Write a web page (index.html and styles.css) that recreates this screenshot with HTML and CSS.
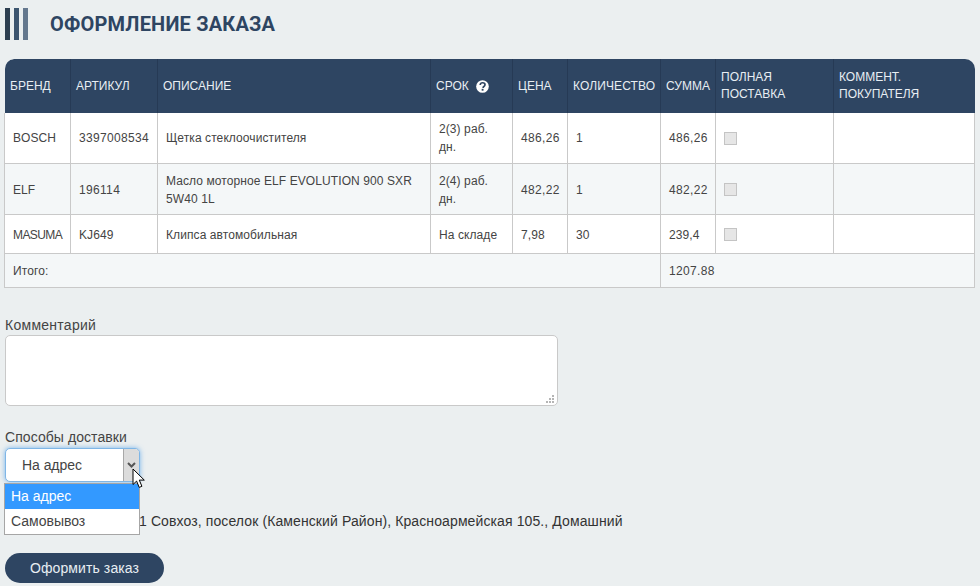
FILE: index.html
```html
<!DOCTYPE html>
<html lang="ru">
<head>
<meta charset="utf-8">
<title>Оформление заказа</title>
<link rel="stylesheet" href="styles.css">
</head>
<body>
<header class="page-head">
  <div class="bars"><i class="bar b1"></i><i class="bar b2"></i><i class="bar b3"></i></div>
  <h1 class="title">ОФОРМЛЕНИЕ ЗАКАЗА</h1>
</header>
<table class="order">
  <colgroup>
    <col class="c1"><col class="c2"><col class="c3"><col class="c4"><col class="c5"><col class="c6"><col class="c7"><col class="c8"><col class="c9">
  </colgroup>
  <thead>
    <tr>
      <th>БРЕНД</th><th>АРТИКУЛ</th><th>ОПИСАНИЕ</th>
      <th><span class="srok">СРОК
        <svg class="help" viewBox="0 0 14 14" width="13" height="13"><circle cx="7" cy="7" r="6.8" fill="#fff"/><path d="M4.5 5.4C4.6 3.9 5.7 3 7.1 3c1.5 0 2.6.9 2.6 2.1 0 1-.6 1.5-1.2 1.9-.6.4-.8.7-.8 1.3v.2" fill="none" stroke="#2e4562" stroke-width="1.8"/><rect x="6.1" y="9.5" width="2" height="2" fill="#2e4562"/></svg></span></th>
      <th>ЦЕНА</th><th class="wide">КОЛИЧЕСТВО</th><th>СУММА</th><th>ПОЛНАЯ ПОСТАВКА</th><th>КОММЕНТ. ПОКУПАТЕЛЯ</th>
    </tr>
  </thead>
  <tbody>
    <tr class="r-tall r-first">
      <td>BOSCH</td><td class="num">3397008534</td><td>Щетка стеклоочистителя</td><td>2(3) раб. дн.</td><td class="num">486,26</td><td>1</td><td class="num">486,26</td><td><span class="check"></span></td><td></td>
    </tr>
    <tr class="r-tall alt">
      <td>ELF</td><td class="num">196114</td><td>Масло моторное ELF EVOLUTION 900 SXR 5W40 1L</td><td>2(4) раб. дн.</td><td class="num">482,22</td><td>1</td><td class="num">482,22</td><td><span class="check"></span></td><td></td>
    </tr>
    <tr class="r-mid">
      <td class="tight">MASUMA</td><td>KJ649</td><td>Клипса автомобильная</td><td>На складе</td><td>7,98</td><td>30</td><td>239,4</td><td><span class="check"></span></td><td></td>
    </tr>
    <tr class="r-total alt">
      <td colspan="6">Итого:</td><td colspan="3" class="num">1207.88</td>
    </tr>
  </tbody>
</table>

<section class="form">
  <label class="lbl lbl-comment">Комментарий</label>
  <div class="area">
    <svg class="grip" viewBox="0 0 9 9" width="9" height="9" fill="#b5b5b5"><rect x="7" y="1" width="2" height="2"/><rect x="4" y="4" width="2" height="2"/><rect x="7" y="4" width="2" height="2"/><rect x="1" y="7" width="2" height="2"/><rect x="4" y="7" width="2" height="2"/><rect x="7" y="7" width="2" height="2"/></svg>
  </div>
  <label class="lbl lbl-delivery">Способы доставки</label>
  <div class="select-wrap">
    <div class="select">
      <span class="select-value">На адрес</span>
      <span class="select-btn">
        <svg viewBox="0 0 9 6" width="9" height="6"><path d="M1 1l3.5 3.5L8 1" fill="none" stroke="#555" stroke-width="2"/></svg>
      </span>
    </div>
    <ul class="options">
      <li class="opt opt-on">На адрес</li>
      <li class="opt">Самовывоз</li>
    </ul>
    <svg class="cursor" viewBox="0 0 14 21" width="14" height="21"><path d="M1 1v15.5l3.6-3.4 2.6 6.3 2.7-1.1-2.6-6.2h5z" fill="#fff" stroke="#000" stroke-width="1"/></svg>
  </div>
  <p class="address">1 Совхоз, поселок (Каменский Район), Красноармейская 105., Домашний</p>
  <button class="submit" type="button">Оформить заказ</button>
</section>
</body>
</html>
```
FILE: styles.css
```css
* { box-sizing: border-box; }
html, body { margin: 0; padding: 0; }
body {
  width: 980px;
  height: 586px;
  overflow: hidden;
  background: #ebeff0;
  color: #444;
  font-family: "Liberation Sans", Arial, sans-serif;
  font-size: 14px;
}
.page-head {
  display: flex;
  align-items: center;
  height: 59px;
  padding: 8px 0 19px 5px;
}
.bars { display: flex; gap: 4px; }
.bar { display: block; width: 5px; height: 32px; }
.b1 { background: #2c3e50; }
.b2 { background: #3c556f; }
.b3 { background: #64788e; }
.title {
  margin: 0 0 0 22px;
  font-family: Roboto, sans-serif;
  font-size: 20px;
  font-weight: 700;
  letter-spacing: .18px;
  color: #2e4562;
}
.order {
  width: 971px;
  margin-left: 4px;
  table-layout: fixed;
  border-collapse: separate;
  border-spacing: 0;
  font-size: 12px;
  background: transparent;
}
.c1 { width: 67px; } .c2 { width: 87px; } .c3 { width: 273px; }
.c4 { width: 82px; } .c5 { width: 55px; } .c6 { width: 93px; }
.c7 { width: 55px; } .c8 { width: 118px; } .c9 { width: 141px; }
.order th {
  height: 54px;
  padding: 0 5px;
  text-align: left;
  font-weight: 400;
  line-height: 17px;
  color: #e8eef3;
  background: #2e4562;
  border-right: 1px solid #263a55;
}
.order th:first-child {
  border-left: 1px solid transparent;
  background-clip: padding-box;
  border-top-left-radius: 10px;
}
.order th:last-child {
  border-right: 0;
  border-top-right-radius: 10px;
}
.order .wide { letter-spacing: .1px; }
.srok { display: inline-flex; align-items: center; gap: 7px; }
.order td {
  padding: 1px 8px 0;
  line-height: 18px;
  letter-spacing: .09px;
  background: #fff;
  border-right: 1px solid #c9c9c9;
  border-bottom: 1px solid #c9c9c9;
}
.order .r-first td { padding-top: 0; }
.order td.num { letter-spacing: .33px; }
.order td.tight { letter-spacing: -.6px; }
.order td:first-child { border-left: 1px solid #c9c9c9; }
.order .alt td { background: #f4f7f8; }
.r-tall td { height: 51px; }
.r-mid td { height: 39px; }
.r-total td { height: 34px; }
.check {
  display: block;
  width: 13px;
  height: 13px;
  background: #e6e6e6;
  border: 1px solid #c4c4c4;
}
.form { padding: 0 0 0 5px; }
.lbl { display: block; line-height: 16px; color: #444; letter-spacing: .07px; }
.lbl-comment { margin-top: 29px; letter-spacing: .27px; }
.area {
  position: relative;
  width: 553px;
  height: 71px;
  margin-top: 2px;
  background: #fff;
  border: 1px solid #c9c9c9;
  border-radius: 5px;
}
.grip { position: absolute; right: 3px; bottom: 2px; }
.lbl-delivery { margin-top: 23px; }
.select-wrap { position: relative; margin-top: 3px; width: 135px; }
.select {
  display: flex;
  height: 34px;
  background: #fff;
  border: 1px solid #7fb6e6;
  border-radius: 5px;
  box-shadow: 0 0 5px rgba(80, 160, 235, .75);
  overflow: hidden;
}
.select-value { flex: 1; padding-left: 16px; line-height: 32px; letter-spacing: -.05px; }
.select-btn {
  display: flex;
  align-items: center;
  justify-content: center;
  width: 16px;
  background: #dcdcdc;
  border-left: 1px solid #a8a8a8;
}
.options {
  position: absolute;
  left: -1px;
  top: 35px;
  width: 136px;
  margin: 0;
  padding: 0;
  list-style: none;
  background: #fff;
  border: 1px solid #a6a6a6;
  z-index: 2;
}
.opt { height: 25px; padding-left: 6px; line-height: 25px; }
.opt-on { background: #3399ff; color: #fff; }
.cursor { position: absolute; left: 127px; top: 20px; z-index: 3; }
.address { margin: 31px 0 0; padding-left: 134px; line-height: 16px; color: #333; letter-spacing: .105px; }
.submit {
  display: block;
  width: 159px;
  height: 30px;
  margin-top: 24px;
  padding: 0;
  border: 0;
  border-radius: 15px;
  background: #2e4562;
  color: #e8eef3;
  font: inherit;
  font-size: 14px;
  letter-spacing: .1px;
}
```
